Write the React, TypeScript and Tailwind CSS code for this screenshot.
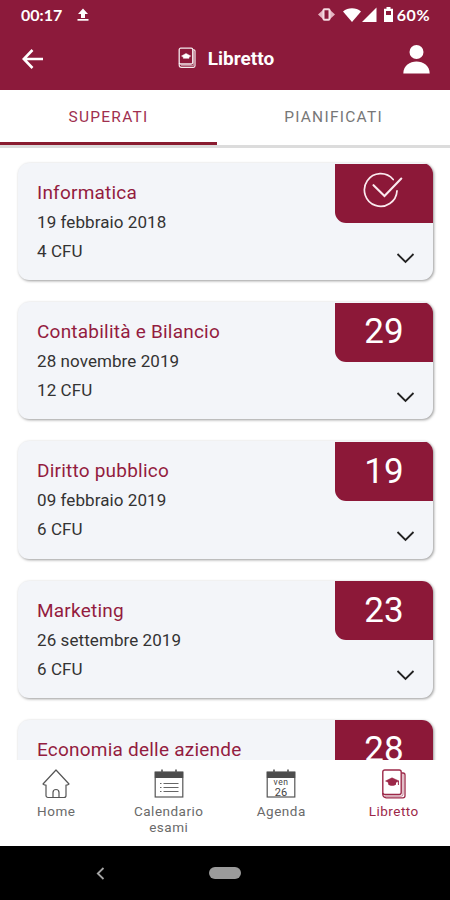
import { useState } from "react";

type Exam = {
  name: string;
  date?: string;
  cfu?: number;
  grade: number | null;
};

const exams: Exam[] = [
  { name: "Informatica", date: "19 febbraio 2018", cfu: 4, grade: null },
  { name: "Contabilità e Bilancio", date: "28 novembre 2019", cfu: 12, grade: 29 },
  { name: "Diritto pubblico", date: "09 febbraio 2019", cfu: 6, grade: 19 },
  { name: "Marketing", date: "26 settembre 2019", cfu: 6, grade: 23 },
  { name: "Economia delle aziende", grade: 28 },
];

function UploadIcon() {
  return (
    <svg width="12" height="14" viewBox="0 0 12 14" fill="currentColor">
      <path d="M6 0.5 L11 6 H8 V10 H4 V6 H1 Z" />
      <rect x="0.5" y="11" width="11" height="1.7" />
    </svg>
  );
}

function StatusIcons() {
  return (
    <svg width="76" height="18" viewBox="0 0 76 18" fill="none">
      {/* vibrate */}
      <path d="M5.5 3.5 L0 8.5 L5.5 13.5 Z M11.5 3.5 L17 8.5 L11.5 13.5 Z" fill="#e3b4c1" />
      <rect x="5.5" y="3.3" width="6" height="10.4" rx="1" stroke="#f3d9e0" strokeWidth="2" />
      {/* wifi */}
      <path d="M25 5.5 C30 1.2 38 1.2 43 5.5 L34 16 Z" fill="#fff" />
      {/* signal */}
      <path d="M58.5 1.5 V16 H44 Z" fill="#fff" />
      {/* battery */}
      <path d="M68.5 1 h4 v1.8 h2.5 v13.2 h-9 v-13.2 h2.5 Z" fill="#fff" />
      <rect x="68" y="5" width="5" height="4" fill="#8c1a3b" />
    </svg>
  );
}

function BookIcon({ className }: { className?: string }) {
  return (
    <svg className={className} viewBox="0 0 26 30" fill="none" stroke="currentColor">
      <rect x="1.8" y="1" width="18.4" height="24.5" rx="2" strokeWidth="1.4" />
      <path d="M1.8 24 V25.5 a3.3 3.3 0 0 0 3.3 3.3 H22 a2 2 0 0 0 2-2 V6 a2 2 0 0 0-2-2 H20.5" strokeWidth="1.3" />
      <path d="M4 27.2 H20 a2 2 0 0 0 2-2 V4.5" strokeWidth="1" opacity="0.6" />
      <path d="M4.5 12 L11 8.8 L18 12 L11.2 15.2 Z" fill="currentColor" strokeWidth="0.5" />
      <path d="M7.2 12 V15.5 C9 17.2 13.3 17.2 15 15.5 V12 Z" fill="currentColor" stroke="none" />
      <path d="M17.4 12 V16" strokeWidth="1" />
    </svg>
  );
}

function HeaderBookIcon() {
  return (
    <svg width="19" height="22" viewBox="0 0 19 22" fill="none" stroke="#fff">
      <rect x="1.2" y="1.2" width="13.5" height="15.8" rx="1.5" strokeWidth="1.3" opacity="0.9" />
      <path d="M1.2 16 V18 a2.3 2.3 0 0 0 2.3 2.3 H15.5 a1.5 1.5 0 0 0 1.5-1.5 V4 a1.2 1.2 0 0 0-1.2-1.2 H15" strokeWidth="1.2" opacity="0.9" />
      <path d="M3 18.6 H15.4 V4" strokeWidth="1" opacity="0.5" />
      <path d="M3.5 9 L8 6.5 L12.7 9 L11 10 V11.3 H5.3 V10 Z" fill="#fff" strokeWidth="0.5" />
    </svg>
  );
}

function HomeIcon() {
  return (
    <svg width="28" height="30" viewBox="0 0 28 30" fill="none" stroke="#555" strokeWidth="1.2" strokeLinejoin="round">
      <path d="M1 15 L14 1 L27 15 L25.5 16 H24 V26.5 a2 2 0 0 1-2 2 H6 a2 2 0 0 1-2-2 V16 H2.5 Z" />
      <path d="M11 28.5 V23.5 a3 3 0 0 1 6 0 V28.5" />
    </svg>
  );
}

function CalendarFrame() {
  return (
    <>
      <rect x="1.2" y="3" width="27.6" height="25" stroke="#555" strokeWidth="1.2" />
      <rect x="0.8" y="3" width="28.4" height="6" fill="#4d4d4d" />
      <path d="M8 0.5 V4 M22 0.5 V4" stroke="#555" strokeWidth="1.6" />
    </>
  );
}

function ListCalendarIcon() {
  return (
    <svg width="30" height="30" viewBox="0 0 30 30" fill="none">
      <CalendarFrame />
      <path d="M9.5 14.5 H24.5 M9.5 18.5 H24.5 M9.5 22.5 H24.5" stroke="#666" strokeWidth="1.2" />
      <path d="M6 14.5 H7.5 M6 18.5 H7.5 M6 22.5 H7.5" stroke="#666" strokeWidth="1.2" />
    </svg>
  );
}

function DayCalendarIcon() {
  return (
    <svg width="30" height="30" viewBox="0 0 30 30" fill="none">
      <CalendarFrame />
      <text x="15" y="16" textAnchor="middle" fontSize="8.5" letterSpacing="0.5" fill="#444">ven</text>
      <text x="15" y="26.6" textAnchor="middle" fontSize="11" letterSpacing="0" fill="#444">26</text>
    </svg>
  );
}

function PassedIcon() {
  return (
    <svg width="40" height="36" viewBox="0 0 40 36" fill="none" stroke="#fbe9ee" strokeLinecap="round">
      <path d="M30.2 7.5 A16.3 16.3 0 1 0 34 18.9" strokeWidth="1.7" />
      <path d="M10.5 13.2 L21.5 24 L38.3 6.5" strokeWidth="2.1" />
    </svg>
  );
}

function ExamCard({ exam }: { exam: Exam }) {
  return (
    <div className="flex h-[117.2px] shrink-0 justify-between overflow-hidden rounded-[11px] bg-[#f3f5f9] shadow-[1px_1px_3px_rgba(0,0,0,0.4)]">
      <div className="pt-[15px] pl-[19px]">
        <h2 className="text-[19px] leading-[30px] tracking-[0.22px] text-[#931c40]">{exam.name}</h2>
        {exam.date && <p className="text-[17px] leading-[29px] tracking-[0.08px] text-[#333]">{exam.date}</p>}
        {exam.cfu && <p className="text-[17px] leading-[29px] tracking-[0.08px] text-[#333]">{exam.cfu} CFU</p>}
      </div>
      <div className="flex w-[98px] flex-col items-end pt-[0.5px]">
        <div className="flex h-[59px] w-full items-center justify-center rounded-bl-[11px] bg-[#8c1838] text-[35px] text-white">
          {exam.grade === null ? (
            <span className="pr-[2px] pb-[6px]">
              <PassedIcon />
            </span>
          ) : (
            <span className="pt-px">{exam.grade}</span>
          )}
        </div>
        <button className="mt-[29px] mr-[18px]">
          <svg width="19" height="13" viewBox="0 0 19 13" fill="none" stroke="#222" strokeWidth="1.8">
            <path d="M1.5 2 L9.5 10 L17.5 2" />
          </svg>
        </button>
      </div>
    </div>
  );
}

const navItems = [
  { label: "Home", icon: <HomeIcon /> },
  { label: "Calendario esami", icon: <ListCalendarIcon /> },
  { label: "Agenda", icon: <DayCalendarIcon /> },
  { label: "Libretto", icon: <BookIcon className="h-[30px] w-[26px]" />, active: true },
];

export default function App() {
  const [tab, setTab] = useState("superati");

  return (
    <div className="flex h-[900px] w-[450px] flex-col overflow-hidden bg-white font-[Roboto,sans-serif]">
      {/* Status bar + header */}
      <header className="h-[90px] shrink-0 bg-[#8c1a3b] text-white">
        <div className="flex h-[29px] items-center justify-between pr-[20px] pl-[21px] font-[Lato,sans-serif] text-[16px] font-bold">
          <div className="flex items-center gap-[15px]">
            <span>00:17</span>
            <UploadIcon />
          </div>
          <div className="flex items-center gap-[3px]">
            <StatusIcons />
            <span className="tracking-[0.5px]">60%</span>
          </div>
        </div>
        <div className="flex h-[60px] items-center justify-between pr-[20px] pl-[22px]">
          <button className="w-[27px]">
            <svg width="22" height="20" viewBox="0 0 22 20" fill="none" stroke="#fff" strokeWidth="2.6">
              <path d="M10.5 1 L1.8 10 L10.5 19 M2 10 H21" />
            </svg>
          </button>
          <div className="flex items-center gap-[11px]">
            <span className="pb-[3px]">
              <HeaderBookIcon />
            </span>
            <h1 className="text-[19px] font-bold">Libretto</h1>
          </div>
          <button>
            <svg width="27" height="30" viewBox="0 0 27 30" fill="#fff">
              <circle cx="13.5" cy="8" r="7" />
              <path d="M0.3 29.5 C0.3 13.5 26.7 13.5 26.7 29.5 Z" />
            </svg>
          </button>
        </div>
      </header>

      {/* Tabs */}
      <div className="flex h-[58px] shrink-0 border-b-[3px] border-[#dcdcdc] text-[15.5px] tracking-[1.25px]">
        <button
          onClick={() => setTab("superati")}
          className={`flex w-[217px] items-center justify-center border-b-[3px] pt-[3px] ${tab === "superati" ? "border-[#8a1c30] text-[#a0304f]" : "border-transparent text-[#777]"}`}
        >
          SUPERATI
        </button>
        <button
          onClick={() => setTab("pianificati")}
          className={`flex flex-1 items-center justify-center border-b-[3px] pt-[3px] ${tab === "pianificati" ? "border-[#8a1c30] text-[#a0304f]" : "border-transparent text-[#777]"}`}
        >
          PIANIFICATI
        </button>
      </div>

      {/* Exams */}
      <main className="flex min-h-0 flex-1 flex-col gap-[22px] overflow-hidden pt-[15px] pr-[17px] pl-[18px]">
        {exams.map((exam) => (
          <ExamCard key={exam.name} exam={exam} />
        ))}
      </main>

      {/* Bottom navigation */}
      <nav className="grid h-[86px] shrink-0 grid-cols-4 bg-white pt-[9px]">
        {navItems.map((item) => (
          <button
            key={item.label}
            className={`flex flex-col items-center justify-start gap-[4px] text-[13.5px] leading-[16px] tracking-[0.5px] ${item.active ? "text-[#9c2848]" : "text-[#6a6a6a]"}`}
          >
            {item.icon}
            <span className="w-[80px]">{item.label}</span>
          </button>
        ))}
      </nav>

      {/* System bar */}
      <div className="grid h-[54px] shrink-0 grid-cols-[200px_50px_200px] items-center bg-black">
        <svg className="justify-self-center" width="9" height="13" viewBox="0 0 9 13" fill="none" stroke="#a5a5a5" strokeWidth="1.8">
          <path d="M7.5 1 L1.8 6.5 L7.5 12" />
        </svg>
        <div className="h-[12px] w-[32px] justify-self-center rounded-full bg-[#9b9b9b]" />
      </div>
    </div>
  );
}
